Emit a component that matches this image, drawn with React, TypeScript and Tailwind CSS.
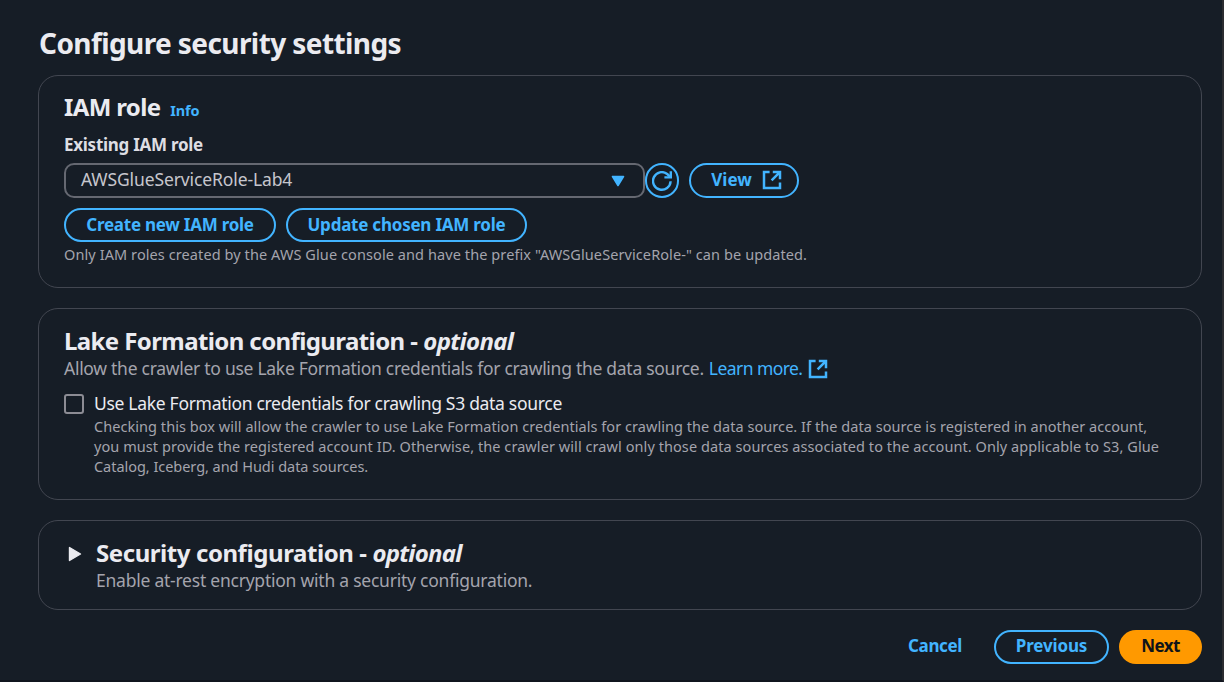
import type { ReactNode } from "react";

function ExternalIcon({ className = "" }: { className?: string }) {
  return (
    <svg viewBox="0 0 20 20" className={`size-5 shrink-0 ${className}`} fill="none" stroke="#42b4ff" strokeWidth="2.5">
      <path d="M7.6 2H2V18H18V12.6" />
      <path d="M10.8 2H18V9.2M17.6 2.4L9.6 10.4" />
    </svg>
  );
}

function RefreshIcon() {
  return (
    <svg viewBox="0 0 20 20" className="size-5" fill="none" stroke="#42b4ff" strokeWidth="2.4">
      <path d="M18.6 10.3A8.8 8.8 0 1 1 15.2 3L18 5.6" />
      <path d="M18.8 0.2V6.4H12.4" />
    </svg>
  );
}

function Button({ children, className = "" }: { children: ReactNode; className?: string }) {
  return (
    <button
      className={`flex items-center justify-center rounded-full border-2 border-[#42b4ff] text-[17px] leading-5 font-bold text-[#42b4ff] ${className}`}
    >
      {children}
    </button>
  );
}

function Card({ children, className = "" }: { children: ReactNode; className?: string }) {
  return <section className={`rounded-[20px] border border-[#424650] pr-6 pl-[25px] ${className}`}>{children}</section>;
}

export default function App() {
  return (
    <div className="h-[682px] w-[1224px] overflow-hidden border-r-2 border-b-2 border-r-[#2b2c30] border-b-[#10151e] bg-[#161d26] pt-[25px] pr-5 pl-[38px] font-['Noto_Sans',sans-serif] whitespace-nowrap">
      <h1 className="pl-px text-[28px] leading-9 font-bold tracking-[-0.587px] text-[#ebebf0]">Configure security settings</h1>

      <Card className="mt-[14px] h-[213px] pt-4">
        <div className="flex items-baseline gap-[10px]">
          <h2 className="text-[24px] leading-[30px] font-bold tracking-[-0.65px] text-[#ebebf0]">IAM role</h2>
          <a className="text-[14.5px] leading-5 font-bold tracking-[-0.2px] text-[#42b4ff]">Info</a>
        </div>
        <div className="mt-[13px] text-[17px] leading-5 font-bold tracking-[-0.269px] text-[#dedee3]">Existing IAM role</div>
        <div className="mt-[8px] flex">
          <div className="flex h-[35px] w-[581px] items-center justify-between rounded-[10px] border-2 border-[#656871] pr-[18px] pl-[15px]">
            <span className="pb-[3px] text-[17.5px] leading-5 tracking-[-0.12px] text-[#c6c6cd]">AWSGlueServiceRole-Lab4</span>
            <svg viewBox="0 0 14 12" className="h-3 w-[14px]">
              <path d="M1.5 1.5H12.5L7 10.5Z" fill="#42b4ff" stroke="#42b4ff" strokeWidth="1.6" strokeLinejoin="round" />
            </svg>
          </div>
          <Button className="h-[35px] w-[34px]">
            <RefreshIcon />
          </Button>
          <Button className="ml-[10px] h-[35px] w-[110px] gap-[10px] pb-px pl-[5px]">
            <span>View</span>
            <ExternalIcon />
          </Button>
        </div>
        <div className="mt-[10px] flex gap-[10px]">
          <Button className="h-[34px] w-[212px] tracking-[-0.248px]">Create new IAM role</Button>
          <Button className="h-[34px] w-[241px] tracking-[-0.227px]">Update chosen IAM role</Button>
        </div>
        <p className="mt-[2px] text-[14.5px] leading-5 tracking-[0.09px] text-[#a4a4ad]">
          Only IAM roles created by the AWS Glue console and have the prefix "AWSGlueServiceRole-" can be updated.
        </p>
      </Card>

      <Card className="mt-5 h-[192px] pt-[17px]">
        <h2 className="flex gap-[6px] text-[24px] leading-[30px] font-bold text-[#ebebf0]">
          <span className="tracking-[-0.6px]">Lake Formation configuration -</span>
          <em className="tracking-[-0.65px]">optional</em>
        </h2>
        <p className="mt-[2px] flex text-[17.5px] leading-5 text-[#a4a4ad]">
          <span className="tracking-[-0.28px]">Allow the crawler to use Lake Formation credentials for crawling the data source.</span>
          <a className="ml-[5px] flex tracking-[-0.57px] text-[#42b4ff]">
            Learn more.
            <ExternalIcon className="mt-px ml-[6px]" />
          </a>
        </p>
        <div className="mt-[14px] flex gap-[10px]">
          <span className="mt-px size-5 shrink-0 rounded-[3px] border-2 border-[#8c8c94]" />
          <div>
            <div className="text-[17.5px] leading-5 tracking-[-0.305px] text-[#ebebf0]">
              Use Lake Formation credentials for crawling S3 data source
            </div>
            <p className="mt-[3px] text-[14.5px] leading-5 text-[#a4a4ad]">
              <span className="tracking-[0.05px]">
                Checking this box will allow the crawler to use Lake Formation credentials for crawling the data source. If the data source is registered in another account,
              </span>
              <br />
              <span className="tracking-[0.072px]">
                you must provide the registered account ID. Otherwise, the crawler will crawl only those data sources associated to the account. Only applicable to S3, Glue
              </span>
              <br />
              <span className="tracking-[-0.04px]">Catalog, Iceberg, and Hudi data sources.</span>
            </p>
          </div>
        </div>
      </Card>

      <Card className="mt-5 flex h-[90px] pt-[17px]">
        <svg viewBox="0 0 14 16" className="mt-2 ml-1 h-4 w-[14px]">
          <path d="M1.5 1.5V14.5L12.5 8Z" fill="#ebebf0" stroke="#ebebf0" strokeWidth="1.4" strokeLinejoin="round" />
        </svg>
        <div className="ml-[14px]">
          <h2 className="flex gap-[6px] text-[24px] leading-[30px] font-bold text-[#ebebf0]">
            <span className="tracking-[-0.43px]">Security configuration -</span>
            <em className="tracking-[-0.75px]">optional</em>
          </h2>
          <p className="mt-[2px] text-[17.5px] leading-5 tracking-[-0.235px] text-[#a4a4ad]">Enable at-rest encryption with a security configuration.</p>
        </div>
      </Card>

      <div className="mt-5 flex justify-end">
        <Button className="mr-[10px] h-[34px] border-transparent px-5 pb-[2px] tracking-[-0.357px]">Cancel</Button>
        <Button className="mr-[10px] h-[34px] w-[115px] pb-[2px] tracking-[-0.141px]">Previous</Button>
        <button className="h-[34px] w-[83px] rounded-full bg-[#ff9900] pb-[2px] text-[17px] leading-5 font-bold tracking-[-0.6px] text-[#0f141a]">
          Next
        </button>
      </div>
    </div>
  );
}
